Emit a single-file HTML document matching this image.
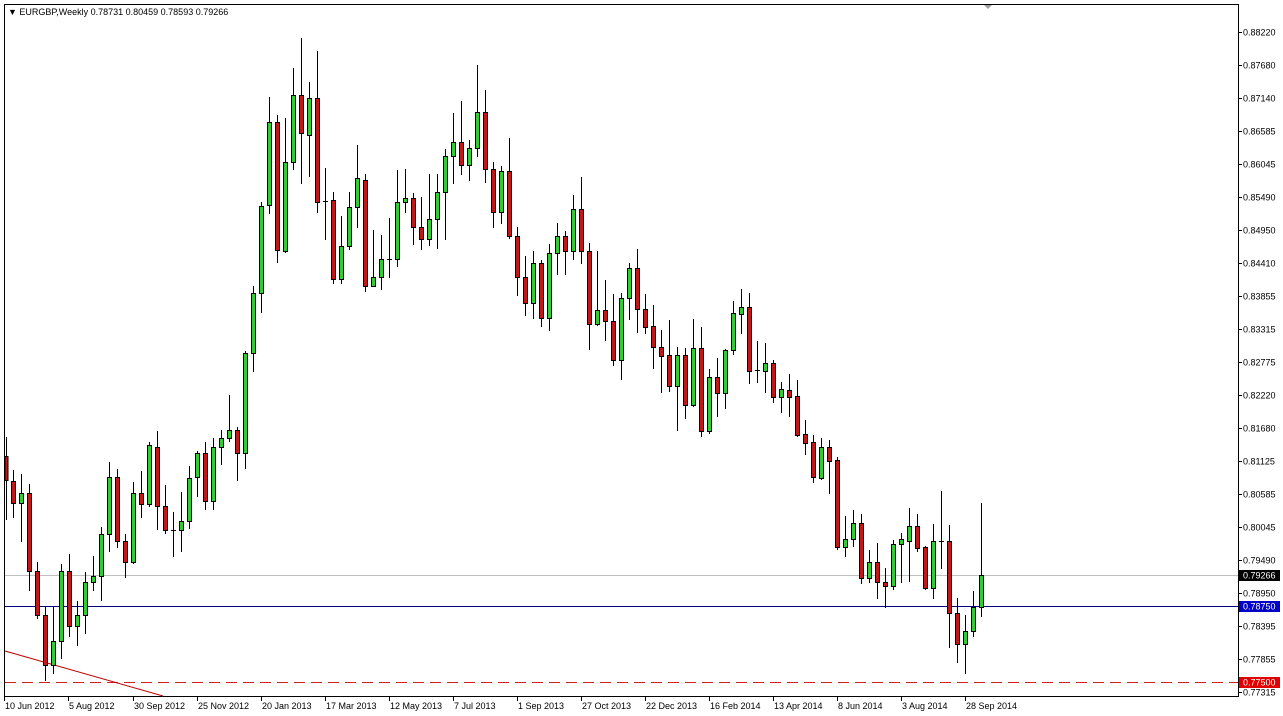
<!DOCTYPE html>
<html><head><meta charset="utf-8"><style>
html,body{margin:0;padding:0;background:#fff;width:1283px;height:716px;overflow:hidden}
svg{position:absolute;left:0;top:0}
text{font-family:"Liberation Sans",sans-serif;font-size:9px;fill:#000}
</style></head><body>
<svg id="s" width="1283" height="716" xmlns="http://www.w3.org/2000/svg">
<rect x="0" y="0" width="1283" height="716" fill="#fff"/>
<rect x="4.5" y="4.5" width="1234" height="692" fill="#fff" stroke="#000" stroke-width="1"/>
<line x1="5" y1="575.5" x2="1238" y2="575.5" stroke="#c0c0c0"/>
<line x1="5" y1="606.5" x2="1238" y2="606.5" stroke="#000080"/>
<line x1="5" y1="682.5" x2="1238" y2="682.5" stroke="#d02020" stroke-dasharray="11,6"/>
<line x1="5" y1="651" x2="163" y2="696" stroke="#c00000"/>
<g id="c"></g>
<polygon points="984,5 992,5 988,9" fill="#a0a0a0"/>
<text x="8" y="15">▼ EURGBP,Weekly  0.78731 0.80459 0.78593 0.79266</text>
<g id="ax"></g>
</svg>
<script>
var NS="http://www.w3.org/2000/svg";
function el(n,a,p,t){var e=document.createElementNS(NS,n);for(var k in a)e.setAttribute(k,a[k]);if(t)e.textContent=t;p.appendChild(e);return e;}
var g=document.getElementById('c');
// [zx, bodyTop, bodyBot, high, low, color(g/r/d)]
var z1=[[15,997,1055,955,1155,'r'],[40,1055,1107,1030,1140,'r'],[64,1083,1107,1038,1195,'g'],[88,1083,1265,1062,1310,'r'],[112,1265,1370,1245,1375,'r'],[136,1370,1487,1350,1520,'r'],[160,1430,1487,1350,1505,'g'],[184,1265,1430,1250,1470,'g'],[208,1265,1395,1225,1418,'r'],[232,1370,1395,1335,1438,'g'],[256,1292,1370,1268,1410,'g'],[280,1278,1292,1232,1310,'g'],[304,1180,1278,1163,1333,'g'],[328,1047,1180,1010,1218,'g'],[352,1047,1195,1027,1210,'r'],[376,1195,1245,1180,1280,'r'],[400,1083,1245,1057,1248,'g'],[424,1083,1110,1032,1140,'r'],[448,970,1110,965,1115,'g'],[472,975,1115,938,1168,'r'],[496,1115,1170,1065,1178,'r'],[520,1170,1170,1128,1232,'d'],[544,1150,1170,1082,1220,'g'],[568,1048,1150,1020,1165,'g'],[592,990,1047,985,1090,'g'],[616,990,1103,965,1120,'r'],[640,975,1103,955,1120,'g'],[664,955,975,935,1015,'g'],[688,935,955,853,962,'g'],[712,935,990,928,1052,'r'],[736,755,990,750,1025,'g'],[760,615,755,600,797,'g'],[784,413,615,402,660,'g'],[808,215,410,157,428,'g'],[832,215,515,200,542,'r'],[856,310,517,205,520,'g'],[880,153,310,90,325,'g'],[904,153,242,18,358,'r'],[928,160,245,122,342,'g'],[952,160,402,48,425,'r'],[976,400,400,323,488,'d']];
var z2=[[40,398,582,378,592,'r'],[64,505,582,435,593,'g'],[88,415,505,380,513,'g'],[112,347,415,270,460,'g'],[136,350,598,338,610,'r'],[160,577,598,468,600,'g'],[184,535,577,480,606,'g'],[208,535,535,440,578,'d'],[232,402,537,328,552,'g'],[256,393,402,325,425,'g'],[280,393,462,382,500,'r'],[304,462,488,390,512,'r'],[328,443,488,337,502,'g'],[352,380,443,337,510,'g'],[376,296,380,278,490,'g'],[400,263,296,195,358,'g'],[424,263,315,166,338,'r'],[448,277,315,258,350,'g'],[472,193,277,83,295,'g'],[496,193,325,140,355,'r'],[520,325,425,310,460,'r'],[544,331,425,318,452,'g'],[568,331,483,253,487,'r'],[592,481,578,460,620,'r'],[616,578,638,530,668,'r'],[640,546,638,518,675,'g'],[664,546,675,538,693,'r'],[688,521,675,500,703,'g'],[712,483,521,452,572,'g'],[736,483,518,470,570,'r'],[760,418,518,387,537,'g'],[784,418,516,345,545,'r'],[808,516,687,498,747,'r'],[832,656,687,517,690,'g'],[856,656,680,585,725,'r'],[880,680,773,618,785,'r'],[904,628,773,615,817,'g'],[928,556,628,545,677,'g'],[952,556,653,513,707,'r']];
var z3=[[15,178,230,132,248,'r'],[40,228,292,165,353,'r'],[64,292,317,240,425,'r'],[88,316,407,210,422,'r'],[112,316,407,290,540,'g'],[136,316,466,293,503,'r'],[160,295,466,207,467,'g'],[184,295,542,232,557,'r'],[208,382,542,358,548,'g'],[232,382,430,325,497,'r'],[256,300,430,297,473,'g'],[280,190,300,153,313,'g'],[304,172,193,117,248,'g'],[328,172,362,128,398,'r'],[352,360,360,272,395,'d'],[376,340,362,280,425,'g'],[400,340,440,330,455,'r'],[424,418,440,397,485,'g'],[448,420,440,373,497,'r'],[472,438,555,390,558,'r'],[496,553,580,510,613,'r'],[520,577,680,555,695,'r'],[544,590,685,565,688,'g'],[568,590,632,570,728,'r'],[592,630,890,620,897,'r'],[616,868,890,798,917,'g'],[640,820,868,780,887,'g'],[664,820,983,793,1000,'r'],[688,937,983,900,997,'g'],[712,937,995,880,1045,'r'],[736,995,1007,955,1072,'r'],[760,883,1007,870,1018,'g'],[784,868,883,848,997,'g'],[808,828,872,775,993,'g'],[832,828,893,793,903,'r'],[856,891,1015,888,1017,'r'],[880,873,1015,822,1045,'g'],[904,873,873,722,953,'d'],[928,873,1090,825,1190,'r'],[952,1090,1183,1045,1235,'r'],[976,1143,1183,1095,1268,'g'],[1000,1070,1143,1022,1157,'g'],[1024,975,1070,758,1097,'g']];
function draw(arr,x0,y0,sx,sy){arr.forEach(function(c){
 var x=Math.round(x0+c[0]/sx),t=Math.round(y0+c[1]/sy),b=Math.round(y0+c[2]/sy),h=Math.round(y0+c[3]/sy),l=Math.round(y0+c[4]/sy);
 if(x<6)return;
 el('line',{x1:x+.5,y1:h,x2:x+.5,y2:l+1,stroke:'#000'},g);
 if(c[5]=='d'){el('line',{x1:x-2,y1:t+.5,x2:x+3,y2:t+.5,stroke:'#000'},g);}
 else el('rect',{x:x-1.5,y:t+.5,width:4,height:Math.max(b-t,1),fill:c[5]=='g'?'#33cc33':'#c01818',stroke:'#000','stroke-width':1},g);
});}
draw(z1,0,30,3,2.34);draw(z2,320,30,3,2.34);draw(z3,640,250,3,3);
// first candle partial
el('line',{x1:6.5,y1:437,x2:6.5,y2:520,stroke:'#000'},g);
el('rect',{x:5,y:456.5,width:3,height:24,fill:'#c01818',stroke:'#000'},g);
var ax=document.getElementById('ax');
var pl=[[32,'0.88220'],[65,'0.87680'],[98,'0.87140'],[131,'0.86585'],[164,'0.86045'],[197,'0.85490'],[230,'0.84950'],[263,'0.84410'],[296,'0.83855'],[329,'0.83315'],[362,'0.82775'],[395,'0.82220'],[428,'0.81680'],[461,'0.81125'],[494,'0.80585'],[527,'0.80045'],[560,'0.79490'],[593,'0.78950'],[626,'0.78395'],[659,'0.77855'],[692,'0.77315']];
pl.forEach(function(p){el('line',{x1:1238,y1:p[0]+.5,x2:1242,y2:p[0]+.5,stroke:'#000'},ax);el('text',{x:1243,y:p[0]+3.5},ax,p[1]);});
[[575,'0.79266','#000'],[606,'0.78750','#0000c8'],[682,'0.77500','#e00000']].forEach(function(p){
 el('rect',{x:1239,y:p[0]-5,width:41,height:11,fill:p[2]},ax);
 el('text',{x:1243,y:p[0]+3.5,style:'fill:#fff'},ax,p[1]);});
var tl=[[4,'10 Jun 2012'],[68,'5 Aug 2012'],[133,'30 Sep 2012'],[197,'25 Nov 2012'],[261,'20 Jan 2013'],[325,'17 Mar 2013'],[389,'12 May 2013'],[453,'7 Jul 2013'],[517,'1 Sep 2013'],[581,'27 Oct 2013'],[645,'22 Dec 2013'],[709,'16 Feb 2014'],[773,'13 Apr 2014'],[837,'8 Jun 2014'],[901,'3 Aug 2014'],[965,'28 Sep 2014']];
tl.forEach(function(t){el('line',{x1:t[0]+.5,y1:697,x2:t[0]+.5,y2:701,stroke:'#000'},ax);el('text',{x:t[0]+1,y:709},ax,t[1]);});
</script>
</body></html>
